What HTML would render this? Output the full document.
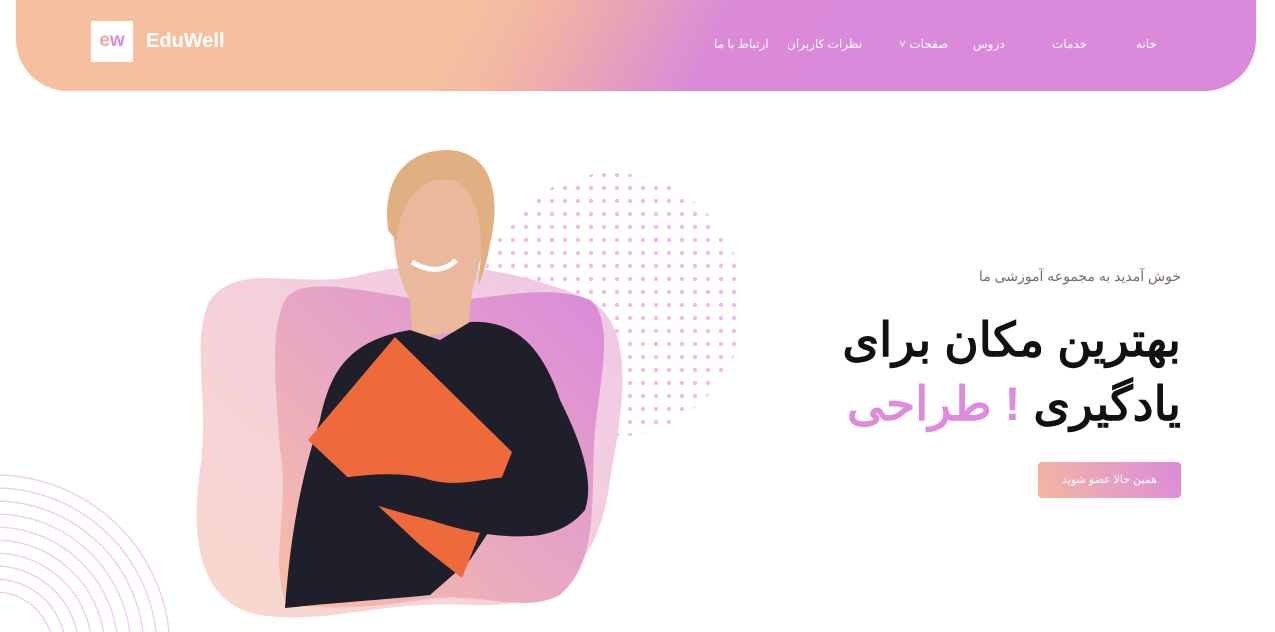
<!DOCTYPE html>
<html><head><meta charset="utf-8"><style>
*{margin:0;padding:0;box-sizing:border-box}
html,body{width:1275px;height:632px;overflow:hidden}
body{background:#fff;position:relative;font-family:"Liberation Sans","Noto Sans CJK SC",sans-serif}
.hdr{position:absolute;left:16px;top:0;width:1240px;height:91px;border-radius:0 0 52px 52px;
background:linear-gradient(118deg,#f6bfa0 0%,#f6bfa0 36%,#f3b8a2 40%,#eeaeab 44%,#e8a2b8 48%,#e196c8 52%,#da8ad9 56%,#d98adb 100%)}
.logo{position:absolute;left:91px;top:21px;width:42px;height:41px;background:#fff;border-radius:2px;font-weight:bold;font-size:19px;color:#d98adb;text-align:center;line-height:40px}
.brand{position:absolute;left:146px;top:30px;color:#fff;font-size:20px;font-weight:bold}
.nav{position:absolute;top:37px;color:#fff;font-size:12px;direction:rtl}
.sub{position:absolute;right:94px;top:268px;font-size:14px;color:#7a6a70;direction:rtl}
.h1{position:absolute;right:94px;top:308px;font-size:47px;font-weight:bold;color:#111;direction:rtl;line-height:64px;text-align:right;white-space:nowrap}
.h1 span{color:#dd8cdc}
.btn{position:absolute;left:1038px;top:462px;width:143px;height:36px;border-radius:4px;background:linear-gradient(60deg,#f3b6a0,#e7a2c0 50%,#da8ad9);color:#fff;font-size:11px;text-align:center;line-height:36px;direction:rtl}
</style></head><body>
<svg width="1275" height="632" style="position:absolute;left:0;top:0">
<g fill="none" stroke="#eccbee" stroke-width="1.3">
<circle cx="-5" cy="650" r="175"/><circle cx="-5" cy="650" r="162"/><circle cx="-5" cy="650" r="149"/><circle cx="-5" cy="650" r="136"/><circle cx="-5" cy="650" r="123"/><circle cx="-5" cy="650" r="110"/><circle cx="-5" cy="650" r="97"/><circle cx="-5" cy="650" r="84"/><circle cx="-5" cy="650" r="71"/><circle cx="-5" cy="650" r="58"/>
</g>
<defs>
<pattern id="dp" width="13" height="13" patternUnits="userSpaceOnUse"><circle cx="6" cy="6" r="2.2" fill="#f0bde4"/></pattern>
<linearGradient id="g1" x1="0" y1="1" x2="1" y2="0"><stop offset="0" stop-color="#f7c0a4"/><stop offset=".5" stop-color="#e8a5c4"/><stop offset="1" stop-color="#d98adb"/></linearGradient>
<linearGradient id="g0" x1="0" y1="1" x2="1" y2="0"><stop offset="0" stop-color="#f9d8cc"/><stop offset="1" stop-color="#efc8e8"/></linearGradient>
</defs>
<circle cx="612" cy="305" r="132" fill="url(#dp)"/>
<path d="M210 300 C240 260 300 290 360 275 C440 255 520 270 590 300 C640 330 620 420 610 480 C600 560 560 610 470 605 C380 600 330 625 260 615 C200 605 190 540 200 470 C210 400 190 340 210 300Z" fill="url(#g0)"/>
<path d="M285 300 C300 275 360 290 420 300 C480 305 540 280 590 300 C615 320 600 380 595 430 C590 500 600 560 560 595 C520 615 480 590 420 600 C360 610 300 610 285 600 C270 560 290 500 280 450 C275 380 270 330 285 300Z" fill="url(#g1)"/>
<path d="M395 250 C388 200 400 165 440 160 C480 158 492 200 485 240 C480 262 475 280 472 292 L468 330 L412 338 L410 300 C400 282 397 265 395 250Z" fill="#eab89c"/>
<path d="M388 230 C382 180 405 150 448 150 C490 152 500 190 492 235 C488 255 484 275 478 285 C484 240 482 200 458 182 C430 172 402 192 396 240Z" fill="#e0b083"/>
<path d="M412 262 C428 272 445 272 456 260" stroke="#fff" stroke-width="5" fill="none"/>
<path d="M285 608 C290 540 300 480 320 420 C330 370 350 340 410 330 L440 340 L470 322 C510 320 540 340 560 400 C580 440 595 480 585 510 C560 540 520 540 490 530 L470 560 L430 595 C380 600 330 603 285 608Z" fill="#1f1e2b"/>
<path d="M308 440 L395 337 L512 452 L462 578 L420 545 Z" fill="#ef6a3a"/>
<path d="M330 480 C360 475 400 470 430 480 C470 490 500 470 530 480 C560 500 570 520 540 535 C500 540 460 530 430 520 C390 510 350 500 330 480Z" fill="#1f1e2b"/>
</svg>
<div class="hdr"></div>
<div class="logo"><span style="color:#f0a8a6">e</span>w</div>
<div class="brand">EduWell</div>
<div class="nav" style="left:1136px">خانه</div>
<div class="nav" style="left:1052px">خدمات</div>
<div class="nav" style="left:973px">دروس</div>
<div class="nav" style="left:899px">صفحات ˅</div>
<div class="nav" style="left:787px">نظرات کاربران</div>
<div class="nav" style="left:714px">ارتباط با ما</div>
<div class="sub">خوش آمدید به مجموعه آموزشی ما</div>
<div class="h1">بهترین مکان برای<br>یادگیری <span>! طراحی</span></div>
<div class="btn">همین حالا عضو شوید</div>
</body></html>
